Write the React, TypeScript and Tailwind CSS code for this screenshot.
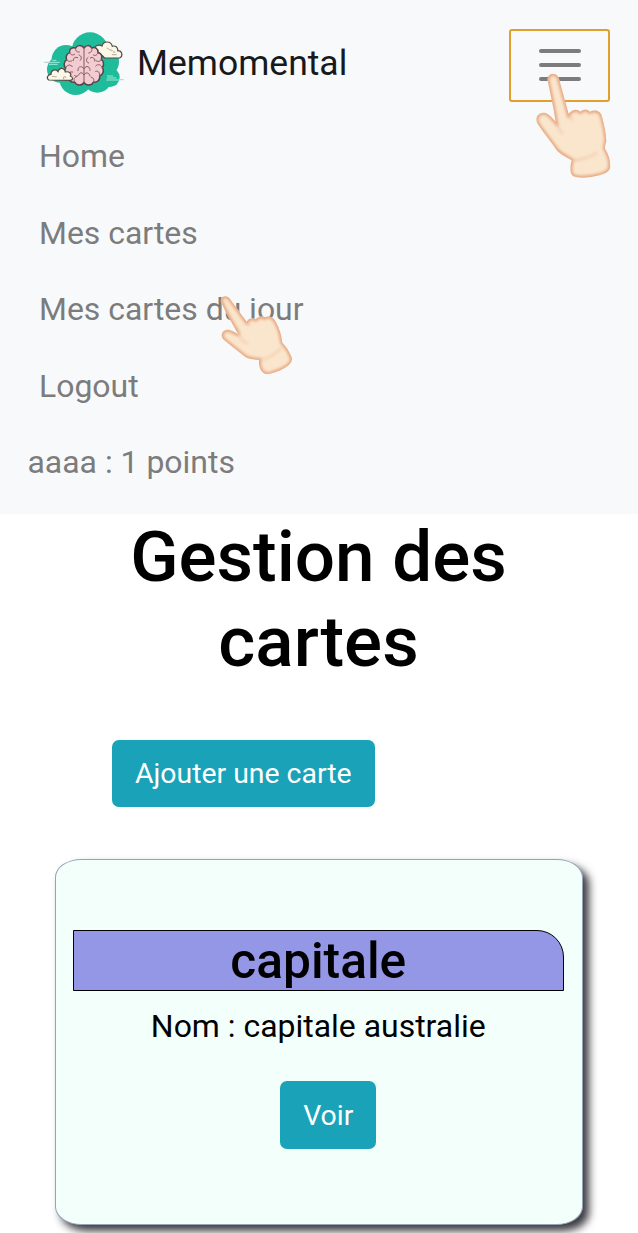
import React from "react";

const navLinks = ["Home", "Mes cartes", "Mes cartes du jour", "Logout"];

function Logo() {
  return (
    <svg viewBox="42 30 246 204" className="h-[68px] w-[82px]" fill="none">
      <g fill="#1fbc9c">
        <circle cx="180" cy="92" r="55" />
        <circle cx="108" cy="118" r="43" />
        <circle cx="91" cy="148" r="40" />
        <circle cx="137" cy="176" r="49" />
        <circle cx="202" cy="174" r="44" />
        <circle cx="240" cy="172" r="29" />
        <circle cx="222" cy="125" r="45" />
      </g>
      <g strokeLinecap="round">
        <path d="M68 121h10M44 127h44M58 133h24" stroke="#b9f2e4" strokeWidth="2.5" />
        <path d="M232 168h16M232 174h26M230 180h42" stroke="#b9f2e4" strokeWidth="2.5" />
        <path d="M44 127h12M268 179h12" stroke="#b6c4c3" strokeWidth="2.5" />
      </g>
      <path
        d="M194 90C190 78 206 72 216 78C220 62 243 62 247 79C257 75 265 84 263 92C277 92 280 108 269 114H224C215 105 208 96 194 90Z"
        fill="#fdf7e8"
        stroke="#534b42"
        strokeWidth="3.5"
      />
      <path d="M230 84c6 0 4 6 12 6s6 8 14 7M246 104h14" stroke="#8a8175" strokeWidth="2" />
      <path
        d="M162 84C155 74 141 75 137 84C125 80 116 89 119 98C108 102 107 112 110 119C99 127 102 139 107 144C100 155 105 166 115 169C115 184 126 188 134 186C141 200 158 196 162 187C168 198 185 197 190 187C204 188 211 178 209 168C220 163 223 151 217 143C224 134 220 122 214 119C218 108 213 98 204 98C205 86 194 79 185 84C180 74 168 75 162 84Z"
        fill="#f3ccd1"
        stroke="#594148"
        strokeWidth="4.5"
        strokeLinejoin="round"
      />
      <path
        d="M162 84V188M137 84c-2 8 4 14 11 12M119 98c3 7 9 9 15 5M143 113c-8-4-14 2-13 9M110 119c5 7 12 6 16 3M107 144c3-10 15-12 20-4M115 169c-1-10 5-15 13-13M134 186c-4-7-2-13 4-15M147 105c8 2 9 11 4 16M162 146c-10-13-20-3-18 6M162 164c-5-8-12-7-15-1s-8 8-13 4M185 84c3 7-2 15-9 15M204 98c-3 9-10 10-14 7M181 114c7-5 14 1 13 9M214 119c-5 8-13 6-17 2M217 143c-3-9-13-13-20-5M209 168c1-10-4-17-12-14M190 187c4-8 1-14-6-15M174 112c-7 5-6 15 2 17M162 146c8-13 19-5 18 5M162 164c8-10 16-5 18 4"
        stroke="#7d5c63"
        strokeWidth="3"
        strokeLinecap="round"
      />
      <path
        d="M56 180C48 174 53 163 63 163C62 149 78 146 84 155C88 140 105 144 106 156C117 153 126 161 121 168C131 172 129 181 121 181Z"
        fill="#fdf7e8"
        stroke="#534b42"
        strokeWidth="3.5"
      />
      <path d="M66 170c6-3 8 2 14 0M101 178v-7c4-3 7 0 8 3" stroke="#8a8175" strokeWidth="2" />
    </svg>
  );
}

type HandProps = { id: string; viewBox: string; outline: string; creases: string; className: string };

function Hand({ id, viewBox, outline, creases, className }: HandProps) {
  return (
    <svg viewBox={viewBox} className={className} fill="none" aria-hidden="true">
      <defs>
        <clipPath id={`${id}-clip`}>
          <path d={outline} />
        </clipPath>
        <filter id={`${id}-soft`} filterUnits="userSpaceOnUse" x="0" y="0" width="444" height="525">
          <feGaussianBlur stdDeviation="5" />
        </filter>
      </defs>
      <path d={outline} fill="#fae6cd" />
      <g clipPath={`url(#${id}-clip)`}>
        <path d={outline} stroke="#e6a47e" strokeWidth="12" filter={`url(#${id}-soft)`} />
        <path d={creases} stroke="#e8b18e" strokeWidth="4" strokeLinecap="round" opacity="0.7" filter={`url(#${id}-soft)`} />
      </g>
    </svg>
  );
}

function Button({ children }: { children: React.ReactNode }) {
  return (
    <button className="block h-[67.5px] rounded-[7px] bg-[#19a2b8] px-[23px] text-[28.4px] leading-[43px] text-white">
      {children}
    </button>
  );
}

export default function App() {
  return (
    <div className="relative h-[1233px] w-full overflow-hidden bg-white font-['Roboto',sans-serif] text-black">
      <nav className="h-[514px] bg-[#f8f9fb] pt-[28px]">
        <div className="flex h-[74px] items-start justify-between pr-[28px] pl-[44px]">
          <div className="flex items-center pt-[2px]">
            <Logo />
            <span className="mb-[2px] ml-[11px] text-[35.5px] leading-[53px] text-[#19191b]">Memomental</span>
          </div>
          <button
            aria-label="Menu"
            className="mt-[0.5px] flex h-[73px] w-[101px] items-center justify-center rounded-[3px] border-2 border-[#e0a02b]"
          >
            <span className="flex flex-col gap-[10.5px]">
              <span className="h-[3.7px] w-[42px] rounded-full bg-[#7c7c7d]" />
              <span className="h-[3.7px] w-[42px] rounded-full bg-[#7c7c7d]" />
              <span className="h-[3.7px] w-[42px] rounded-full bg-[#7c7c7d]" />
            </span>
          </button>
        </div>
        <ul className="mt-[16.3px] text-[31.95px] leading-[76.4px] text-[#7c7c7d]">
          {navLinks.map((label) => (
            <li key={label} className="pl-[39px]">
              {label}
            </li>
          ))}
          <li className="pl-[27.5px]">aaaa : 1 points</li>
        </ul>
      </nav>

      <main>
        <h1 className="ml-[108.5px] w-[420px] text-center text-[71px] leading-[85.2px] font-medium">Gestion des cartes</h1>
        <div className="mt-[55.3px] pl-[112px]">
          <Button>Ajouter une carte</Button>
        </div>
        <section className="mt-[51.8px] ml-[55px] flex h-[366px] w-[527.5px] flex-col items-center rounded-[5%] border border-[#94a3b8] bg-[#f3fffb] px-[17px] pt-[70px] shadow-[6px_6px_8px_#3a3a40]">
          <h2 className="h-[61px] w-[491px] rounded-tr-[27px] border border-black bg-[#9496e6] pr-px text-center text-[49.7px] leading-[60.5px] font-medium">
            capitale
          </h2>
          <p className="mt-[11px] pr-px text-[31.95px] leading-[48px]">Nom : capitale australie</p>
          <div className="mt-[31.3px] pl-[19px]">
            <Button>Voir</Button>
          </div>
        </section>
      </main>

      <Hand
        id="menu-hand"
        viewBox="0 0 444 525"
        className="pointer-events-none absolute top-[15px] left-[490px] h-[175px] w-[148px]"
        outline="M173 197C171 171 202 170 207 191L236 297C246 281 264 281 271 290C282 281 293 282 299 290C314 283 332 286 336 305C343 330 348 353 349 378C347 388 344 395 345 401C354 413 361 434 361 456C359 473 336 481 303 486C281 489 261 489 250 484C240 477 239 459 245 436C228 425 207 417 197 401C177 373 155 346 142 325C130 301 157 285 173 297C184 305 192 315 197 320C191 278 180 232 173 197Z"
        creases="M197 320C202 337 211 349 219 356M236 297C240 306 244 310 246 313M245 436C270 437 304 425 320 414"
      />
      <Hand
        id="link-hand"
        viewBox="0 0 360 330"
        className="pointer-events-none absolute top-[280px] left-[200px] h-[110px] w-[120px]"
        outline="M63 65C58 48 82 42 90 57L140 125C146 114 160 112 167 118C176 108 188 107 193 113C205 105 221 111 226 123C239 145 245 168 247 188C255 196 268 211 276 235C277 254 253 268 218 279C207 284 194 284 188 277C180 270 176 257 177 240C161 238 144 238 133 229C111 210 86 193 69 177C57 159 75 145 91 151C102 155 110 160 116 164C99 134 77 98 63 65Z"
        creases="M116 164C123 179 134 188 143 191M140 125L148 136M177 240C207 236 230 218 242 205"
      />
    </div>
  );
}
